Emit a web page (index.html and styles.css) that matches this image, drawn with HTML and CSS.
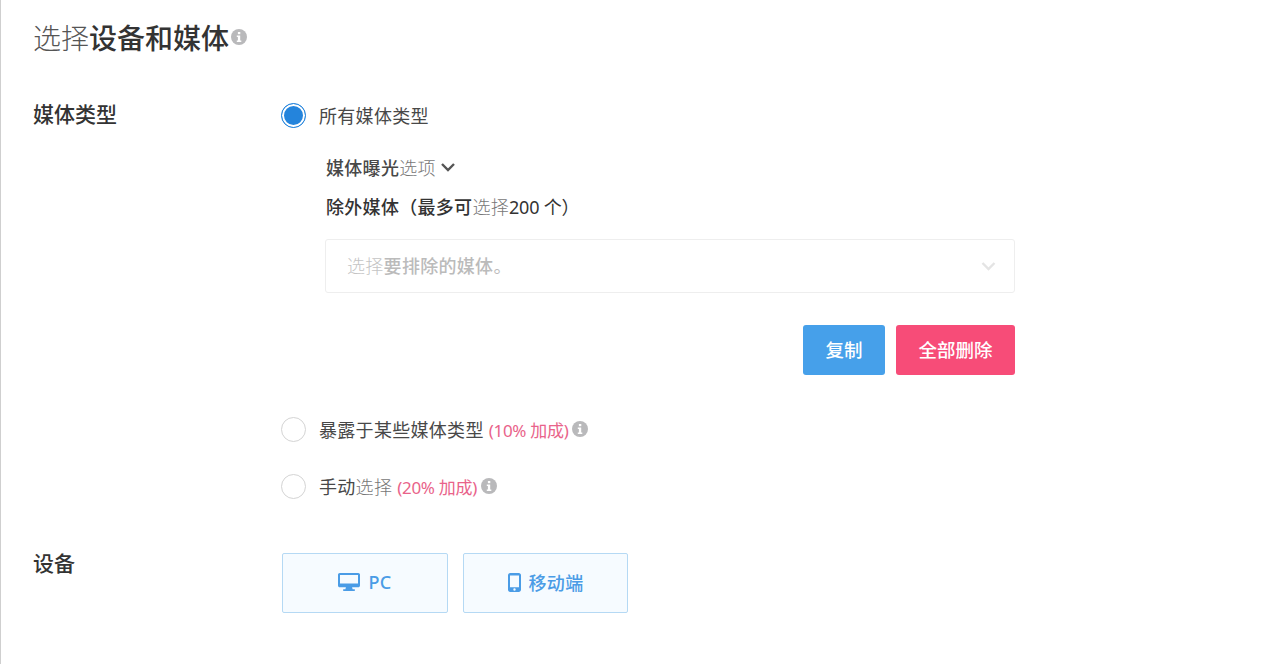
FILE: index.html
```html
<!DOCTYPE html>
<html lang="zh">
<head>
  <meta charset="UTF-8">
  <title>选择设备和媒体</title>
  <link rel="stylesheet" href="styles.css">
</head>
<body>
  <div class="page">
    <h1 class="title"><span class="thin">选择</span>设备和媒体<svg class="info info-title" viewBox="0 0 16 16"><use href="#info"></use></svg></h1>

    <section class="row row-media">
      <h2 class="row-label">媒体类型</h2>
      <div class="row-body">
        <label class="radio-line">
          <span class="radio radio-on"></span>
          <span>所有媒体类型</span>
        </label>

        <div class="sub">
          <div class="sub-toggle">
            <b>媒体曝光</b><span class="thin">选项</span>
            <svg class="chev" viewBox="0 0 16 10"><path d="M2 2l6 6 6-6" fill="none" stroke="currentColor" stroke-width="2.4"/></svg>
          </div>
          <div class="sub-title"><b>除外媒体（最多可</b><span class="thin">选择</span><b class="count">200 个）</b></div>
          <div class="select">
            <span><span class="ph-thin">选择</span><b>要排除的媒体</b>。</span>
            <svg class="select-chev" viewBox="0 0 16 10"><path d="M2 2l6 6 6-6" fill="none" stroke="currentColor" stroke-width="2.4"/></svg>
          </div>
          <div class="actions">
            <button class="btn btn-blue" type="button">复制</button>
            <button class="btn btn-pink" type="button">全部删除</button>
          </div>
        </div>

        <label class="radio-line line-second">
          <span class="radio"></span>
          <span>暴露于某些媒体类型 <em>(10% 加成)</em></span>
          <svg class="info" viewBox="0 0 16 16"><use href="#info"></use></svg>
        </label>
        <label class="radio-line line-third">
          <span class="radio"></span>
          <span>手动<span class="thin">选择</span> <em>(20% 加成)</em></span>
          <svg class="info" viewBox="0 0 16 16"><use href="#info"></use></svg>
        </label>
      </div>
    </section>

    <section class="row row-device">
      <h2 class="row-label">设备</h2>
      <div class="devices">
        <button class="device device-pc" type="button">
          <svg class="device-icon" width="22" height="18" viewBox="0 0 22 18"><path fill="currentColor" fill-rule="evenodd" d="M1.8 0h18.4C21.2 0 22 .8 22 1.8v10.7c0 1-.8 1.8-1.8 1.8h-6.1l.5 1.9h2.2V18H5.200v-1.800h2.200l.5-1.900H1.800C.8 14.300 0 13.500 0 12.500V1.800C0 .8.8 0 1.800 0zM2 2v8.600h18V2z"/></svg>
          PC
        </button>
        <button class="device" type="button">
          <svg class="device-icon" width="13" height="19" viewBox="0 0 13 19"><path fill="currentColor" fill-rule="evenodd" d="M2.200 0h8.600C12 0 13 1 13 2.200v14.600c0 1.200-1 2.200-2.200 2.200H2.200C1 19 0 18 0 16.800V2.200C0 1 1 0 2.200 0zM2 2.500v11.800h9V2.500zM6.500 15.300a1.200 1.200 0 1 0 0 2.400 1.200 1.200 0 0 0 0-2.400z"/></svg>
          移动端
        </button>
      </div>
    </section>
  </div>

  <svg class="defs" width="0" height="0">
    <symbol id="info" viewBox="0 0 16 16">
      <circle cx="8" cy="8" r="8" fill="#b9b9bb"/>
      <rect x="6.900" y="3" width="2.400" height="2.200" fill="#fff"/>
      <path d="M5.800 6.500h3.400v5h1.100v1.400H5.800v-1.400h1.100V7.900H5.800z" fill="#fff"/>
    </symbol>
  </svg>
</body>
</html>
```

FILE: styles.css
```css
* {
  margin: 0;
  padding: 0;
  box-sizing: border-box;
}

html, body {
  height: 100%;
}

body {
  font-family: "Noto Sans", "Noto Sans CJK SC", sans-serif;
  font-size: 18px;
  letter-spacing: 0.3px;
  color: #484848;
  background-color: #fff;
  overflow: hidden;
}

.page {
  height: 664px;
  padding: 0 0 0 32px;
  border-left: 1px solid #cfcfcf;
}

.defs {
  position: absolute;
}

b {
  font-weight: 500;
}

em {
  font-size: 17px;
  font-style: normal;
  letter-spacing: -0.3px;
  color: #e9638a;
}

.thin {
  font-weight: 300;
  color: #777;
}

/* Title */
.title {
  display: flex;
  align-items: center;
  height: 74px;
  font-size: 28px;
  font-weight: 500;
  letter-spacing: 0;
  color: #333;
}

.title .thin {
  color: #555;
}

.info {
  width: 16px;
  height: 16px;
  flex: none;
  margin-left: 4px;
}

.info-title {
  margin-left: 2px;
}

/* Rows */
.row {
  display: flex;
}

.row-label {
  width: 248px;
  font-size: 21px;
  font-weight: 500;
  line-height: 28px;
  letter-spacing: 0;
  color: #333;
}

.row-media {
  padding-top: 26px;
}

.row-body {
  width: 733px;
}

.radio-line {
  display: flex;
  align-items: center;
  height: 30px;
}

.radio {
  width: 25px;
  height: 25px;
  margin-right: 13px;
  border: 1px solid #d4d4d4;
  border-radius: 50%;
  background-color: #fff;
  flex: none;
}

.radio-on {
  border: 1px solid #2484dc;
  background-color: #2484dc;
  box-shadow: inset 0 0 0 2px #fff;
}

.sub {
  margin: 22px 0 0 44px;
}

.sub-toggle {
  display: flex;
  align-items: center;
  height: 30px;
  padding-left: 1px;
}

.chev {
  width: 16px;
  height: 10px;
  margin-left: 4px;
  color: #555;
}

.sub-title {
  height: 30px;
  margin-top: 10px;
  padding-left: 1px;
  line-height: 30px;
  color: #333;
}

.count {
  font-weight: 400;
  letter-spacing: -0.2px;
}

.select {
  display: flex;
  align-items: center;
  justify-content: space-between;
  width: 690px;
  height: 54px;
  margin-top: 17px;
  padding: 0 17px 0 21px;
  border: 1px solid #eee;
  border-radius: 3px;
  color: #bbb;
}

.select > span {
  margin-top: -2px;
}

.ph-thin {
  font-weight: 300;
  color: #c4c4c4;
}

.select-chev {
  width: 17px;
  height: 10px;
  color: #e4e4e4;
}

.actions {
  display: flex;
  justify-content: flex-end;
  gap: 11px;
  width: 690px;
  margin-top: 32px;
}

.btn {
  height: 50px;
  padding-bottom: 2px;
  border: none;
  border-radius: 3px;
  font: inherit;
  font-size: 18.5px;
  font-weight: 500;
  letter-spacing: 0;
  color: #fff;
}

.btn-blue {
  width: 82px;
  background-color: #46a0ea;
}

.btn-pink {
  width: 119px;
  background-color: #f74c78;
}

.line-second {
  margin-top: 39px;
}

.line-third {
  margin-top: 27px;
}

/* Devices */
.row-device {
  margin-top: 48px;
}

.devices {
  display: flex;
  gap: 15px;
  margin: 4px 0 0 1px;
}

.device {
  display: flex;
  align-items: center;
  justify-content: center;
  gap: 8px;
  width: 166px;
  height: 60px;
  padding-bottom: 2px;
  border: 1px solid #b5d9f4;
  border-radius: 2px;
  background-color: #f6fbff;
  font: inherit;
  font-weight: 500;
  letter-spacing: 0.3px;
  color: #4a9ce6;
}

.device + .device {
  width: 165px;
}

.device-icon {
  flex: none;
}
```
